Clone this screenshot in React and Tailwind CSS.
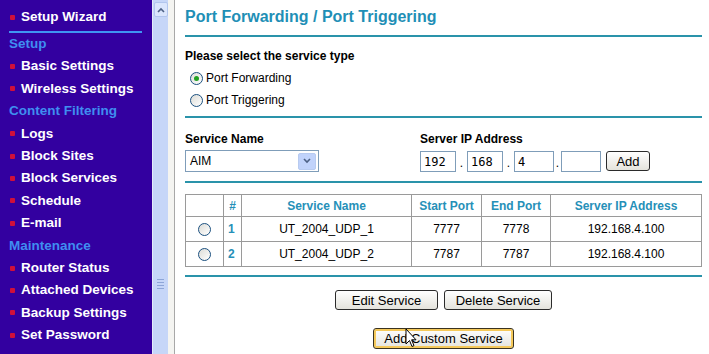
import React from 'react';

const menu = [
  { t: 'Setup', h: true },
  { t: 'Basic Settings' },
  { t: 'Wireless Settings' },
  { t: 'Content Filtering', h: true },
  { t: 'Logs' },
  { t: 'Block Sites' },
  { t: 'Block Services' },
  { t: 'Schedule' },
  { t: 'E-mail' },
  { t: 'Maintenance', h: true },
  { t: 'Router Status' },
  { t: 'Attached Devices' },
  { t: 'Backup Settings' },
  { t: 'Set Password' },
];

const rows = [
  { n: 1, name: 'UT_2004_UDP_1', start: '7777', end: '7778', ip: '192.168.4.100' },
  { n: 2, name: 'UT_2004_UDP_2', start: '7787', end: '7787', ip: '192.168.4.100' },
];

const Bullet = () => <span className="w-[5px] h-[5px] rounded-[1px] bg-[#d0103a] mr-[6px] shrink-0" />;

const Radio = ({ checked }) => (
  <span className="w-[13px] h-[13px] rounded-full border border-[#1c5180] bg-gradient-to-br from-[#dcdcd7] to-white flex items-center justify-center shrink-0">
    {checked && <span className="w-[5px] h-[5px] rounded-full bg-[#21a121]" />}
  </span>
);

const XpButton = ({ children, className = '' }) => (
  <button
    type="button"
    className={`h-[20px] rounded-[3px] border border-[#2b2b2b] bg-gradient-to-b from-white to-[#e4e3dc] text-[13px] text-black leading-none ${className}`}
  >
    {children}
  </button>
);

const Sidebar = () => (
  <div className="w-[152px] shrink-0 bg-[#3300a0] pt-[6px] pl-[9px] font-bold text-[13.5px]">
    <div className="h-[23px] flex items-center pl-[1px] text-white">
      <Bullet />
      Setup Wizard
    </div>
    <div className="mt-[2px] mr-[10px] h-[2px] bg-[#3f95f2]" />
    {menu.map((m) =>
      m.h ? (
        <div key={m.t} className="h-[22.4px] flex items-center text-[#3f8ef0]">
          {m.t}
        </div>
      ) : (
        <div key={m.t} className="h-[22.4px] flex items-center pl-[1px] text-white">
          <Bullet />
          {m.t}
        </div>
      )
    )}
  </div>
);

const Scrollbar = () => (
  <div className="w-[16px] shrink-0 bg-[#c6d6f8] border-l border-[#e4ecfc] flex flex-col items-center">
    <div className="mt-[2px] w-[14px] h-[15px] rounded-[2px] border border-[#b2c6ee] bg-[#dbe6fd] flex items-center justify-center">
      <svg width="8" height="6" viewBox="0 0 8 6">
        <path d="M1 5 L4 2 L7 5" fill="none" stroke="#4d6185" strokeWidth="1.6" />
      </svg>
    </div>
    <div className="mt-[262px] flex flex-col gap-[2px]">
      <div className="w-[7px] h-px bg-[#8ea6d8]" />
      <div className="w-[7px] h-px bg-[#8ea6d8]" />
      <div className="w-[7px] h-px bg-[#8ea6d8]" />
      <div className="w-[7px] h-px bg-[#8ea6d8]" />
    </div>
  </div>
);

const IpBox = ({ w, v }) => (
  <div className={`${w} h-[21px] border border-[#7f9db9] bg-white text-[12px] font-['DejaVu_Sans_Mono',monospace] pl-[3px] flex items-center`}>
    {v}
  </div>
);

export default function App() {
  return (
    <div className="w-[709px] h-[354px] overflow-hidden flex bg-white font-['Liberation_Sans',Arial,sans-serif] relative">
      <Sidebar />
      <Scrollbar />
      <div className="w-[7px] shrink-0 bg-[#f4f4f1] border-r border-[#a8a8a8]" />

      <div className="flex-1 pl-[10px] pr-[7px] pt-[8px]">
        <div className="text-[16px] leading-[18px] font-bold text-[#1f8fb6]">
          Port Forwarding / Port Triggering
        </div>
        <div className="mt-[9px] h-[2px] bg-[#2a93aa]" />

        <div className="mt-[12px] text-[12px] leading-[14px] font-bold text-black">
          Please select the service type
        </div>
        <div className="mt-[4px] text-[12px] text-black">
          <div className="h-[22px] flex items-center pl-[5px] gap-[3px]">
            <Radio checked />
            Port Forwarding
          </div>
          <div className="h-[22px] flex items-center pl-[5px] gap-[3px]">
            <Radio />
            Port Triggering
          </div>
        </div>
        <div className="mt-[5px] h-[2px] bg-[#2a93aa]" />

        <div className="mt-[14px] flex">
          <div className="w-[235px]">
            <div className="text-[12px] leading-[14px] font-bold text-black">Service Name</div>
            <div className="mt-[4px] w-[134px] h-[22px] border border-[#7f9db9] bg-white flex items-center pl-[4px] pr-[2px]">
              <span className="flex-1 text-[12px] text-black">AIM</span>
              <span className="w-[18px] h-[17px] rounded-[2px] border border-[#b8cbf0] bg-[#c1d3fb] flex items-center justify-center">
                <svg width="8" height="6" viewBox="0 0 8 6">
                  <path d="M1 1 L4 4 L7 1" fill="none" stroke="#4d6185" strokeWidth="1.6" />
                </svg>
              </span>
            </div>
          </div>
          <div>
            <div className="text-[12px] leading-[14px] font-bold text-black">Server IP Address</div>
            <div className="mt-[5px] flex items-end text-[12px]">
              <IpBox w="w-[36px]" v="192" />
              <span className="w-[11px] text-center">.</span>
              <IpBox w="w-[36px]" v="168" />
              <span className="w-[11px] text-center">.</span>
              <IpBox w="w-[40px]" v="4" />
              <span className="w-[7px] text-center">.</span>
              <IpBox w="w-[40px]" v="" />
              <XpButton className="ml-[5px] w-[44px] mb-[1px]">Add</XpButton>
            </div>
          </div>
        </div>
        <div className="mt-[9px] h-[2px] bg-[#2a93aa]" />

        <table className="mt-[11px] w-[517px] border-collapse border border-[#9a9a9a] text-[12px]">
          <thead>
            <tr className="h-[22px] text-[#2690b8] font-bold">
              <th className="w-[38px] border border-[#9a9a9a]" />
              <th className="w-[18px] border border-[#9a9a9a]">#</th>
              <th className="w-[170px] border border-[#9a9a9a]">Service Name</th>
              <th className="w-[70px] border border-[#9a9a9a]">Start Port</th>
              <th className="w-[69px] border border-[#9a9a9a]">End Port</th>
              <th className="border border-[#9a9a9a]">Server IP Address</th>
            </tr>
          </thead>
          <tbody>
            {rows.map((r) => (
              <tr key={r.n} className="h-[25px] text-center text-black">
                <td className="border border-[#9a9a9a]">
                  <div className="flex justify-center">
                    <Radio />
                  </div>
                </td>
                <td className="border border-[#9a9a9a] text-left pl-[4px] font-bold text-[#2690b8]">{r.n}</td>
                <td className="border border-[#9a9a9a]">{r.name}</td>
                <td className="border border-[#9a9a9a]">{r.start}</td>
                <td className="border border-[#9a9a9a]">{r.end}</td>
                <td className="border border-[#9a9a9a]">{r.ip}</td>
              </tr>
            ))}
          </tbody>
        </table>
        <div className="mt-[8px] h-[2px] bg-[#2a93aa]" />

        <div className="mt-[13px] flex justify-center gap-[6px]">
          <XpButton className="w-[103px]">Edit Service</XpButton>
          <XpButton className="w-[108px]">Delete Service</XpButton>
        </div>
        <div className="mt-[18px] flex justify-center">
          <XpButton className="w-[141px] h-[21px] border-[#3a3320] shadow-[inset_0_0_0_2px_#f5c95a]">
            Add Custom Service
          </XpButton>
        </div>
      </div>

      <svg className="absolute left-[405px] top-[328px]" width="12" height="20" viewBox="0 0 12 20">
        <path d="M1 1 L1 16 L4.5 12.5 L7 18.5 L9 17.6 L6.6 11.8 L11 11.8 Z" fill="white" stroke="black" strokeWidth="1" />
      </svg>
    </div>
  );
}
